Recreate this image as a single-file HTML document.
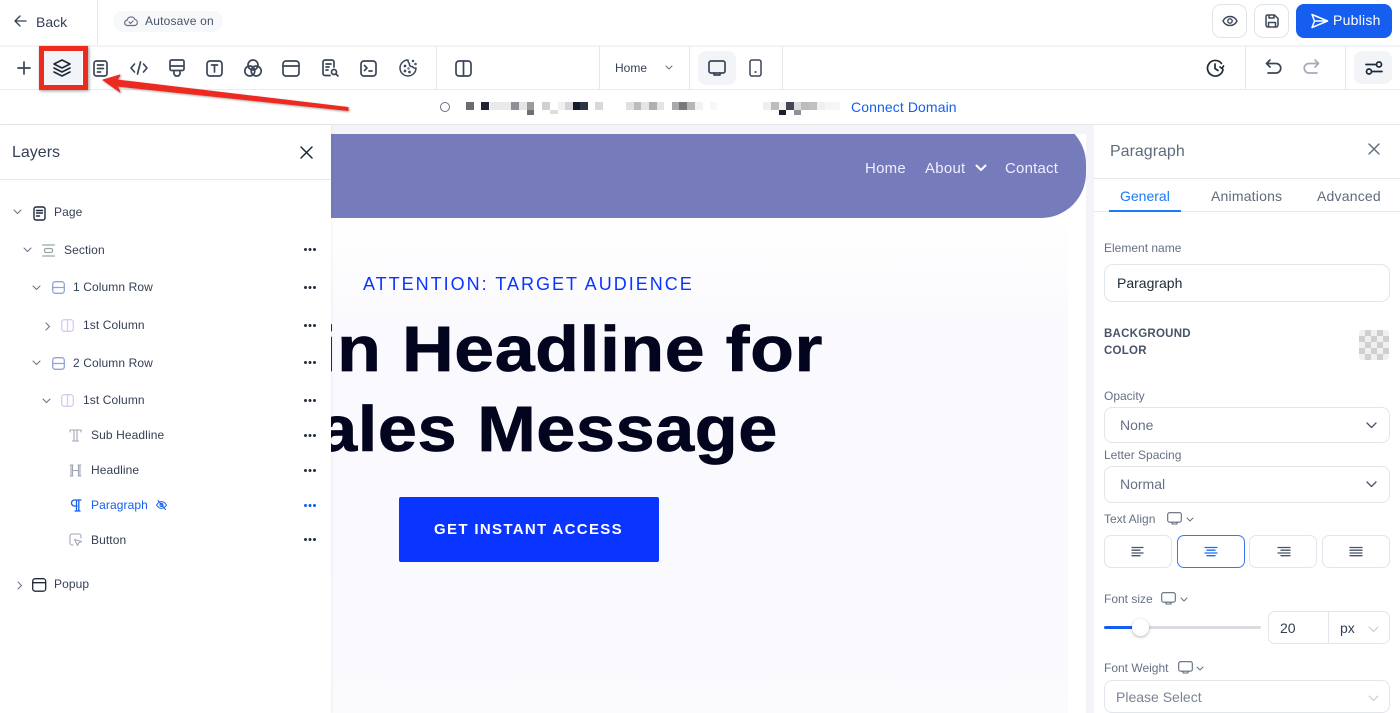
<!DOCTYPE html>
<html><head><meta charset="utf-8"><style>
*{box-sizing:border-box}
html,body{margin:0;padding:0;width:1400px;height:713px;overflow:hidden;background:#fff;font-family:"Liberation Sans",sans-serif}
.a{position:absolute}
.t{position:absolute;white-space:nowrap;line-height:1}
svg{position:absolute;overflow:visible;fill:none;stroke-linecap:round;stroke-linejoin:round}
.i{stroke:#3b4658;stroke-width:1.7}
.l{font-size:12px;color:#344054;letter-spacing:.1px}
.d{position:absolute;left:304px;width:12px;height:3px;background:radial-gradient(circle at 1.5px 1.5px,#2a3342 1.4px,transparent 1.6px) 0 0/4.5px 3px repeat-x}
.box{position:absolute;background:#fff;border:1.5px solid #e2e5ea;border-radius:7px}
.lb{position:absolute;white-space:nowrap;line-height:1;font-size:12px;color:#667085}
.h{position:absolute;white-space:nowrap;line-height:1;font-size:64px;font-weight:700;color:#03051f;letter-spacing:.5px;transform:scaleX(1.12);transform-origin:right center;-webkit-text-stroke:.7px #03051f}
</style></head><body>
<!-- canvas -->
<div class="a" style="left:331px;top:125px;width:763px;height:588px;background:#f2f4f7"></div>
<div class="a" style="left:331px;top:134px;width:755px;height:579px;background:#fff;overflow:hidden">
  <div class="a" style="left:0;top:84px;width:737px;height:495px;background:linear-gradient(#fff,#f9f9fe 25%,#f9f9fe 70%,#fbfbfe)"></div>
  <div class="a" style="left:-20px;top:-15px;width:775px;height:99px;background:#767bbb;border-radius:0 45px 45px 0"></div>
  <div class="t" style="left:534px;top:27px;font-size:15px;color:#eef;letter-spacing:.25px">Home</div>
  <div class="t" style="left:594px;top:27px;font-size:15px;color:#eef;letter-spacing:.25px">About</div>
  <svg style="left:644px;top:30px" width="12" height="8"><path d="M1.5 1.5L6 6l4.500-4.500" stroke="#fff" stroke-width="2"/></svg>
  <div class="t" style="left:674px;top:27px;font-size:15px;color:#eef;letter-spacing:.2px">Contact</div>
  <div class="t" style="left:32px;top:141px;font-size:18px;color:#0a34ff;letter-spacing:2px">ATTENTION: TARGET AUDIENCE</div>
  <div class="h" style="right:263px;top:183px">Main Headline for</div>
  <div class="h" style="right:308px;top:263px;transform:scaleX(1.098)">Sales Message</div>
  <div class="a" style="left:68px;top:363px;width:260px;height:65px;background:#0a34ff;border-radius:2px"></div>
  <div class="t" style="left:103px;top:388px;font-size:15px;font-weight:700;color:#fff;letter-spacing:1.33px">GET INSTANT ACCESS</div>
</div>

<!-- header -->
<div class="a" style="left:0;top:45px;width:1400px;height:2px;background:#f2f4f7"></div>
<div class="a" style="left:97px;top:0;width:1px;height:45px;background:#e4e7ec"></div>
<svg class="i" style="left:14px;top:15px;stroke:#344054;stroke-width:1.3" width="13" height="12"><path d="M6 1L1 6l5 5M1 6h11"/></svg>
<div class="t" style="left:36px;top:15px;font-size:14px;color:#344054">Back</div>
<div class="a" style="left:113px;top:11px;width:110px;height:21px;background:#f7f8fa;border-radius:11px"></div>
<svg style="left:124px;top:15px;stroke:#667085;stroke-width:1.2" width="14" height="12"><path d="M3.500 10.500a2.700 2.700 0 0 1-.3-5.400 4 4 0 0 1 7.600-.7 3.100 3.100 0 0 1 0 6.100zM5 7l1.500 1.500L9 6"/></svg>
<div class="t" style="left:145px;top:15px;font-size:12px;color:#475467;letter-spacing:.2px">Autosave on</div>
<div class="a" style="left:1212px;top:4px;width:35px;height:34px;border:1.5px solid #e0e4ea;border-radius:9px"></div>
<svg class="i" style="left:1222px;top:15px;stroke-width:1.4" width="16" height="12"><path d="M1 6c3-6 11-6 14 0-3 6-11 6-14 0z"/><circle cx="8" cy="6" r="2.200"/></svg>
<div class="a" style="left:1254px;top:4px;width:35px;height:34px;border:1.5px solid #e0e4ea;border-radius:9px"></div>
<svg class="i" style="left:1265px;top:14px;stroke-width:1.5" width="14" height="14"><path d="M2.500 1h7L13 4.500V11a2 2 0 0 1-2 2H3a2 2 0 0 1-2-2V2.500A1.500 1.500 0 0 1 2.500 1zM4 1v3h5V1M3.500 13V8.500h7V13"/></svg>
<div class="a" style="left:1296px;top:4px;width:96px;height:34px;background:#155eef;border-radius:8px"></div>
<svg style="left:1311px;top:13px;stroke:#fff;stroke-width:1.5" width="18" height="16"><path d="M1 1.500L16.500 8 1 14.500 3.500 8zM3.500 8h13"/></svg>
<div class="t" style="left:1333px;top:13px;font-size:14px;color:#fff;letter-spacing:.25px">Publish</div>

<!-- toolbar -->
<div class="a" style="left:0;top:89px;width:1400px;height:1px;background:#eaecf0"></div>
<div class="a" style="left:436px;top:46px;width:1px;height:43px;background:#e4e7ec"></div>
<div class="a" style="left:599px;top:46px;width:1px;height:43px;background:#e4e7ec"></div>
<div class="a" style="left:689px;top:46px;width:1px;height:43px;background:#e4e7ec"></div>
<div class="a" style="left:782px;top:46px;width:1px;height:43px;background:#e4e7ec"></div>
<div class="a" style="left:1245px;top:46px;width:1px;height:43px;background:#e4e7ec"></div>
<div class="a" style="left:1345px;top:46px;width:1px;height:43px;background:#e4e7ec"></div>

<svg class="i" style="left:17px;top:61px;stroke-width:1.700" width="14" height="14"><path d="M7 1v12M1 7h12"/></svg>
<div class="a" style="left:43px;top:50px;width:39px;height:36px;background:#f2f4f7"></div>
<svg class="i" style="left:53px;top:59px;stroke:#1d2939;stroke-width:1.6" width="18" height="18"><path d="M9 1l8 4-8 4-8-4zM1 9l8 4 8-4M1 13l8 4 8-4"/></svg>
<svg class="i" style="left:93px;top:60px" width="15" height="16"><rect x="1" y="1" width="13" height="15" rx="2.500"/><path d="M4.500 5h6M4.500 8.500h6M4.500 12h3"/></svg>
<svg class="i" style="left:130px;top:61px" width="18" height="14"><path d="M4.500 3L1 7l3.500 4M13.500 3L17 7l-3.500 4M10.500 1l-3 12"/></svg>
<svg class="i" style="left:169px;top:59px" width="16" height="18"><path d="M2.500 1h11A1.500 1.500 0 0 1 15 2.500V10a1.500 1.500 0 0 1-1.500 1.500h-11A1.500 1.500 0 0 1 1 10V2.500A1.500 1.500 0 0 1 2.500 1zM1 7h14M5 11.500V15l1.500 2h3l1.500-2v-3.500"/></svg>
<svg class="i" style="left:206px;top:60px" width="17" height="16"><rect x="1" y="1" width="15" height="15" rx="3"/><path d="M5.500 5h6M8.500 5v7"/></svg>
<svg class="i" style="left:244px;top:59px" width="18" height="18"><circle cx="9" cy="6" r="5"/><circle cx="5.800" cy="12" r="5"/><circle cx="12.200" cy="12" r="5"/></svg>
<svg class="i" style="left:282px;top:60px" width="18" height="16"><rect x="1" y="1" width="16" height="15" rx="3"/><path d="M1 6h16"/></svg>
<svg class="i" style="left:322px;top:59px" width="17" height="18"><path d="M8 16.500H3A2 2 0 0 1 1 14.500V3a2 2 0 0 1 2-2h7a2 2 0 0 1 2 2v5M4 5h5M4 8h3M4 11h2"/><circle cx="12" cy="13" r="2.500"/><path d="M14 15l2 2"/></svg>
<svg class="i" style="left:360px;top:60px" width="16" height="16"><rect x="1" y="1" width="15" height="15" rx="3"/><path d="M4.500 5.500L7 8l-2.500 2.500M9 11h3"/></svg>
<svg class="i" style="left:399px;top:59px;stroke-width:1.500" width="18" height="18"><path d="M9 1a8 8 0 1 0 8 8c-1.500.5-3-.2-3.500-1.500C11.500 8 10 6.500 10.500 4.500 9.500 4 9 2.500 9 1z"/><circle cx="6" cy="7" r=".6"/><circle cx="6" cy="12" r=".6"/><circle cx="10.500" cy="13" r=".6"/><circle cx="9.500" cy="9.500" r=".4"/><circle cx="14" cy="2" r=".5"/><circle cx="16.500" cy="5" r=".5"/></svg>
<svg class="i" style="left:455px;top:60px" width="17" height="16"><rect x="1" y="1" width="15" height="15" rx="3"/><path d="M8.500 1v15"/></svg>
<div class="t" style="left:615px;top:62px;font-size:12px;color:#344054">Home</div>
<svg style="left:665px;top:65px;stroke:#667085;stroke-width:1" width="8" height="5"><path d="M1 1l3 3 3-3"/></svg>
<div class="a" style="left:698px;top:51px;width:38px;height:34px;background:#f2f4f7;border-radius:8px"></div>
<svg class="i" style="left:708px;top:60px" width="18" height="16"><rect x="1" y="1" width="16" height="12" rx="2"/><path d="M6 13v2h6v-2"/></svg>
<svg class="i" style="left:749px;top:59px;stroke-width:1.500" width="14" height="18"><rect x="1" y="1" width="11" height="16" rx="2"/><path d="M6.500 13h.1" stroke-width="2"/></svg>
<svg class="i" style="left:1206px;top:59px;stroke:#1d2939;stroke-width:1.700" width="19" height="18"><path d="M17 10.500A7.800 7.800 0 1 1 15.500 4.500M9 5v4.500l3 2M17.500 7l-1.500 2.500-2-1.500"/></svg>
<svg class="i" style="left:1265px;top:59px" width="16" height="16"><path d="M5 1L1.500 4.500 5 8M2 4.500h9a3.800 3.800 0 0 1 0 9.500H3"/></svg>
<svg style="left:1304px;top:59px;stroke:#a4abb6;stroke-width:1.700" width="16" height="16"><path d="M11 1l3.500 3.500L11 8M14 4.500H5a3.800 3.800 0 0 0 0 9.500h8"/></svg>
<div class="a" style="left:1354px;top:51px;width:38px;height:33px;background:#f2f4f7;border-radius:8px"></div>
<svg class="i" style="left:1365px;top:61px;stroke:#1d2939" width="18" height="14"><path d="M1 3.500h10M7 10.500h10"/><circle cx="14" cy="3.500" r="2.500"/><circle cx="4" cy="10.500" r="2.500"/></svg>

<!-- url bar -->
<div class="a" style="left:0;top:124px;width:1400px;height:1px;background:#e6e8ec"></div>
<div class="a" style="left:440px;top:102px;width:10px;height:10px;border:1.300px solid #667085;border-radius:50%"></div>
<svg style="left:460px;top:100px" width="400" height="16"><g stroke="none">
<rect x="6" y="2" width="8" height="8" fill="#6b6b75"/><rect x="21" y="2" width="8" height="8" fill="#1d2535"/>
<rect x="30" y="2" width="21" height="8" fill="#eaeaea"/><rect x="51" y="2" width="8" height="8" fill="#8f8f96"/><rect x="59" y="2" width="8" height="8" fill="#e5e5e6"/><rect x="67" y="2" width="7" height="8" fill="#9a9a9f"/><rect x="67" y="10" width="7" height="5" fill="#6e6e74"/>
<rect x="82" y="2" width="8" height="8" fill="#d0d0d2"/><rect x="90" y="10" width="8" height="4" fill="#dedede"/><rect x="98" y="2" width="7" height="8" fill="#f0f0f0"/><rect x="105" y="2" width="8" height="8" fill="#d4d4d6"/><rect x="113" y="2" width="7" height="8" fill="#141a2c"/><rect x="120" y="2" width="8" height="8" fill="#2e3444"/><rect x="135" y="2" width="8" height="8" fill="#d8d8da"/>
<rect x="166" y="2" width="8" height="8" fill="#e0e0e2"/><rect x="174" y="2" width="7" height="8" fill="#bcbcbe"/><rect x="181" y="2" width="8" height="8" fill="#e5e5e6"/><rect x="189" y="2" width="8" height="8" fill="#b0b0b3"/><rect x="197" y="2" width="7" height="8" fill="#e5e5e6"/>
<rect x="212" y="2" width="7" height="8" fill="#a9a9ac"/><rect x="219" y="2" width="8" height="8" fill="#77777d"/><rect x="227" y="2" width="8" height="8" fill="#b5b5b8"/><rect x="235" y="2" width="8" height="8" fill="#f2f2f2"/><rect x="250" y="2" width="7" height="8" fill="#f8f8f8"/>
<rect x="303" y="2" width="8" height="8" fill="#eeeeee"/><rect x="311" y="2" width="8" height="8" fill="#bdbdc0"/><rect x="319" y="2" width="7" height="8" fill="#f2f2f3"/><rect x="326" y="2" width="8" height="8" fill="#434755"/><rect x="334" y="2" width="7" height="8" fill="#dcdcdd"/><rect x="341" y="2" width="8" height="8" fill="#bcbcbe"/><rect x="349" y="2" width="8" height="8" fill="#c0c0c3"/><rect x="357" y="2" width="8" height="8" fill="#f0f0f0"/><rect x="365" y="2" width="15" height="8" fill="#f6f6f6"/>
<rect x="319" y="10" width="7" height="5" fill="#1a2030"/><rect x="334" y="10" width="7" height="5" fill="#909095"/>
</g></svg>
<div class="t" style="left:851px;top:100px;font-size:14px;color:#155eef;letter-spacing:.1px">Connect Domain</div>

<!-- layers -->
<div class="a" style="left:0;top:125px;width:331px;height:588px;background:#fff;box-shadow:1px 0 3px rgba(0,0,0,.05)"></div>
<div class="a" style="left:0;top:179px;width:331px;height:1px;background:#e4e7ec"></div>
<div class="t" style="left:12px;top:145px;font-size:16px;color:#344054">Layers</div>
<svg class="i" style="left:300px;top:146px;stroke:#1d2939;stroke-width:1.500" width="13" height="13"><path d="M1 1l11 11M12 1L1 12"/></svg>

<svg style="left:13px;top:209px;stroke:#667085;stroke-width:1" width="9" height="6"><path d="M1 1l3.500 3.500L8 1"/></svg>
<svg class="i" style="left:33px;top:206px;stroke:#1d2939;stroke-width:1.400" width="13" height="15"><rect x="1" y="1" width="11" height="13" rx="2"/><path d="M3.500 4.500h6M3.500 7h6M3.500 10h3"/></svg>
<div class="t l" style="left:54px;top:206px">Page</div>

<svg style="left:23px;top:247px;stroke:#667085;stroke-width:1" width="9" height="6"><path d="M1 1l3.500 3.500L8 1"/></svg>
<svg style="left:42px;top:244px;stroke:#9aa89f;stroke-width:1.300" width="13" height="13"><path d="M.7 1h11.600M.7 12h11.600"/><rect x="2.500" y="4.500" width="8" height="4" rx="1.500"/></svg>
<div class="t l" style="left:64px;top:244px">Section</div>

<svg style="left:32px;top:285px;stroke:#667085;stroke-width:1" width="9" height="6"><path d="M1 1l3.500 3.500L8 1"/></svg>
<svg style="left:52px;top:281px;stroke:#8fa3dd;stroke-width:1.300" width="13" height="13"><rect x=".7" y=".7" width="11.600" height="11.600" rx="2.500"/><path d="M.7 6.500h11.600"/></svg>
<div class="t l" style="left:73px;top:281px">1 Column Row</div>

<svg style="left:45px;top:322px;stroke:#667085;stroke-width:1" width="6" height="9"><path d="M1 1l3.500 3.500L1 8"/></svg>
<svg style="left:61px;top:319px;stroke:#dcc9f3;stroke-width:1.300" width="13" height="13"><rect x=".7" y=".7" width="11.600" height="11.600" rx="2.500"/><path d="M6.500.7v11.600"/></svg>
<div class="t l" style="left:83px;top:319px">1st Column</div>

<svg style="left:32px;top:360px;stroke:#667085;stroke-width:1" width="9" height="6"><path d="M1 1l3.500 3.500L8 1"/></svg>
<svg style="left:52px;top:357px;stroke:#8fa3dd;stroke-width:1.300" width="13" height="13"><rect x=".7" y=".7" width="11.600" height="11.600" rx="2.500"/><path d="M.7 6.500h11.600"/></svg>
<div class="t l" style="left:73px;top:357px">2 Column Row</div>

<svg style="left:42px;top:398px;stroke:#667085;stroke-width:1" width="9" height="6"><path d="M1 1l3.500 3.500L8 1"/></svg>
<svg style="left:61px;top:394px;stroke:#dcc9f3;stroke-width:1.300" width="13" height="13"><rect x=".7" y=".7" width="11.600" height="11.600" rx="2.500"/><path d="M6.500.7v11.600"/></svg>
<div class="t l" style="left:83px;top:394px">1st Column</div>

<svg style="left:69px;top:429px;stroke:#a0a7b3;stroke-width:1.100" width="13" height="13"><path d="M1 3V1h11v2M5 1v11M8 1v11M3.500 12h6"/></svg>
<div class="t l" style="left:91px;top:429px">Sub Headline</div>
<svg style="left:69px;top:464px;stroke:#a0a7b3;stroke-width:1.100" width="13" height="13"><path d="M1 1h3M1 12h3M9 1h3M9 12h3M2 1v11M3.500 1v11M9.500 1v11M11 1v11M3.500 6.500h6"/></svg>
<div class="t l" style="left:91px;top:464px">Headline</div>
<svg style="left:70px;top:499px;stroke:#155eef;stroke-width:1.300" width="12" height="13"><path d="M11 1H4.500a3 3 0 0 0 0 6H7M6.500 1v11M8.800 1v11M5 12h5"/></svg>
<div class="t" style="left:91px;top:499px;font-size:12px;letter-spacing:.1px;color:#155eef">Paragraph</div>
<svg style="left:156px;top:500px;stroke:#155eef;stroke-width:1" width="11" height="10"><path d="M.5 5c3-4.500 7-4.500 10 0-3 4.500-7 4.500-10 0zM2 .5l7.500 9"/><circle cx="5.500" cy="5" r="1.500"/></svg>
<svg style="left:69px;top:533px;stroke:#a0a7b3;stroke-width:1.100" width="13" height="14"><path d="M4 12H3a2 2 0 0 1-2-2V3a2 2 0 0 1 2-2h7a2 2 0 0 1 2 2v2"/><path d="M5.500 6.500l7 2-2.800 1.300-1.200 2.700z"/></svg>
<div class="t l" style="left:91px;top:534px">Button</div>

<svg style="left:17px;top:581px;stroke:#667085;stroke-width:1" width="6" height="9"><path d="M1 1l3.500 3.500L1 8"/></svg>
<svg class="i" style="left:32px;top:578px;stroke:#1d2939;stroke-width:1.300" width="14" height="14"><rect x=".7" y=".7" width="13" height="12.500" rx="2.500"/><path d="M.7 4.700h13"/></svg>
<div class="t l" style="left:54px;top:578px">Popup</div>

<div class="d" style="top:248px"></div><div class="d" style="top:286px"></div><div class="d" style="top:324px"></div><div class="d" style="top:361px"></div><div class="d" style="top:399px"></div><div class="d" style="top:434px"></div><div class="d" style="top:469px"></div>
<div class="d" style="top:504px;background-image:radial-gradient(circle at 1.500px 1.500px,#155eef 1.400px,transparent 1.600px)"></div>
<div class="d" style="top:538px"></div>

<!-- right panel -->
<div class="a" style="left:1094px;top:125px;width:306px;height:588px;background:#fff"></div>
<div class="t" style="left:1110px;top:144px;font-size:16px;color:#5f6b7a">Paragraph</div>
<svg style="left:1368px;top:143px;stroke:#5f6b7a;stroke-width:1.400" width="12" height="12"><path d="M1 1l10 10M11 1L1 11"/></svg>
<div class="a" style="left:1094px;top:178px;width:306px;height:1px;background:#e6e8ec"></div>
<div class="a" style="left:1094px;top:211px;width:306px;height:1px;background:#e6e8ec"></div>
<div class="a" style="left:1109px;top:210px;width:72px;height:2px;background:#1a7cf5"></div>
<div class="t" style="left:1120px;top:189px;font-size:14px;color:#1a7cf5">General</div>
<div class="t" style="left:1211px;top:189px;font-size:14px;color:#5f6b7a;letter-spacing:.2px">Animations</div>
<div class="t" style="left:1317px;top:189px;font-size:14px;color:#5f6b7a;letter-spacing:.2px">Advanced</div>

<div class="lb" style="left:1104px;top:242px">Element name</div>
<div class="box" style="left:1104px;top:264px;width:286px;height:38px;border-radius:9px"></div>
<div class="t" style="left:1117px;top:276px;font-size:14px;color:#1d2939">Paragraph</div>
<div class="t" style="left:1104px;top:326px;font-size:11.500px;font-weight:700;color:#475467;letter-spacing:.25px;line-height:17px">BACKGROUND<br>COLOR</div>
<div class="a" style="left:1359px;top:330px;width:30px;height:30px;border-radius:3px;background:conic-gradient(#cfcfcf 25%,#f0f0f0 0 50%,#cfcfcf 0 75%,#f0f0f0 0) 0 0/12px 12px"></div>

<div class="lb" style="left:1104px;top:390px">Opacity</div>
<div class="box" style="left:1104px;top:407px;width:286px;height:36px;border-radius:8px"></div>
<div class="t" style="left:1120px;top:418px;font-size:14px;color:#667085">None</div>
<svg style="left:1366px;top:422px;stroke:#475467;stroke-width:1.300" width="11" height="7"><path d="M1 1l4.500 4.500L10 1"/></svg>

<div class="lb" style="left:1104px;top:449px">Letter Spacing</div>
<div class="box" style="left:1104px;top:466px;width:286px;height:37px;border-radius:8px"></div>
<div class="t" style="left:1120px;top:477px;font-size:14px;color:#667085">Normal</div>
<svg style="left:1366px;top:481px;stroke:#475467;stroke-width:1.300" width="11" height="7"><path d="M1 1l4.500 4.500L10 1"/></svg>

<div class="lb" style="left:1104px;top:513px">Text Align</div>
<svg style="left:1167px;top:512px;stroke:#5f6b7a;stroke-width:1.100" width="15" height="13"><rect x=".7" y=".7" width="13.600" height="9.500" rx="1.800"/><path d="M5 10.200v1.800h5v-1.800"/></svg>
<svg style="left:1186px;top:517px;stroke:#667085;stroke-width:1" width="8" height="5"><path d="M1 1l3 3 3-3"/></svg>

<div class="box" style="left:1104px;top:535px;width:68px;height:33px"></div>
<svg style="left:1131px;top:546px;stroke:#475467;stroke-width:1.300" width="14" height="11"><path d="M1 1.500h11M1 4.200h8M1 7h11M1 9.700h8"/></svg>
<div class="box" style="left:1177px;top:535px;width:68px;height:33px;border-color:#3a78f2"></div>
<svg style="left:1204px;top:546px;stroke:#1a6cf5;stroke-width:1.300" width="14" height="11"><path d="M1 1.500h12M3 4.200h8M1 7h12M3 9.700h8"/></svg>
<div class="box" style="left:1249px;top:535px;width:68px;height:33px"></div>
<svg style="left:1277px;top:546px;stroke:#475467;stroke-width:1.300" width="14" height="11"><path d="M1 1.500h12M4 4.200h9M1 7h12M4 9.700h9"/></svg>
<div class="box" style="left:1322px;top:535px;width:68px;height:33px"></div>
<svg style="left:1349px;top:546px;stroke:#475467;stroke-width:1.300" width="14" height="11"><path d="M1 1.500h12M1 4.200h12M1 7h12M1 9.700h12"/></svg>

<div class="lb" style="left:1104px;top:593px">Font size</div>
<svg style="left:1161px;top:592px;stroke:#5f6b7a;stroke-width:1.100" width="15" height="13"><rect x=".7" y=".7" width="13.600" height="9.500" rx="1.800"/><path d="M5 10.200v1.800h5v-1.800"/></svg>
<svg style="left:1180px;top:597px;stroke:#667085;stroke-width:1" width="8" height="5"><path d="M1 1l3 3 3-3"/></svg>
<div class="a" style="left:1104px;top:626px;width:157px;height:3px;background:#d9dbe0;border-radius:2px"></div>
<div class="a" style="left:1104px;top:626px;width:30px;height:3px;background:#155eef;border-radius:2px"></div>
<div class="a" style="left:1132px;top:619px;width:17px;height:17px;background:#fff;border-radius:50%;box-shadow:0 1px 3px rgba(0,0,0,.3)"></div>
<div class="box" style="left:1268px;top:611px;width:122px;height:33px"></div>
<div class="a" style="left:1328px;top:612px;width:1px;height:31px;background:#e2e5ea"></div>
<div class="t" style="left:1280px;top:621px;font-size:14px;color:#344054">20</div>
<div class="t" style="left:1340px;top:621px;font-size:14px;color:#344054">px</div>
<svg style="left:1368px;top:626px;stroke:#c3c7ce;stroke-width:1" width="11" height="7"><path d="M1 1l4.500 4.500L10 1"/></svg>

<div class="lb" style="left:1104px;top:662px">Font Weight</div>
<svg style="left:1178px;top:661px;stroke:#5f6b7a;stroke-width:1.100" width="15" height="13"><rect x=".7" y=".7" width="13.600" height="9.500" rx="1.800"/><path d="M5 10.200v1.800h5v-1.800"/></svg>
<svg style="left:1196px;top:666px;stroke:#667085;stroke-width:1" width="8" height="5"><path d="M1 1l3 3 3-3"/></svg>
<div class="box" style="left:1104px;top:680px;width:286px;height:33px;border-radius:8px"></div>
<div class="t" style="left:1116px;top:690px;font-size:14px;color:#7a8493">Please Select</div>
<svg style="left:1368px;top:695px;stroke:#c3c7ce;stroke-width:1" width="11" height="7"><path d="M1 1l4.500 4.500L10 1"/></svg>

<!-- annotation -->
<div class="a" style="left:39px;top:46px;width:49px;height:44px;border:5px solid #ed2a20;box-shadow:1px 1px 3px rgba(0,0,0,.4)"></div>
<svg style="left:100px;top:70px;filter:drop-shadow(1px 1px 1px rgba(0,0,0,.35))" width="255" height="45"><path d="M3 10L20 5 17 10 248 37.500 248 40.500 17 16 20 22z" fill="#ee2a20" stroke="#ee2a20" stroke-width="1"/></svg>
</body></html>
